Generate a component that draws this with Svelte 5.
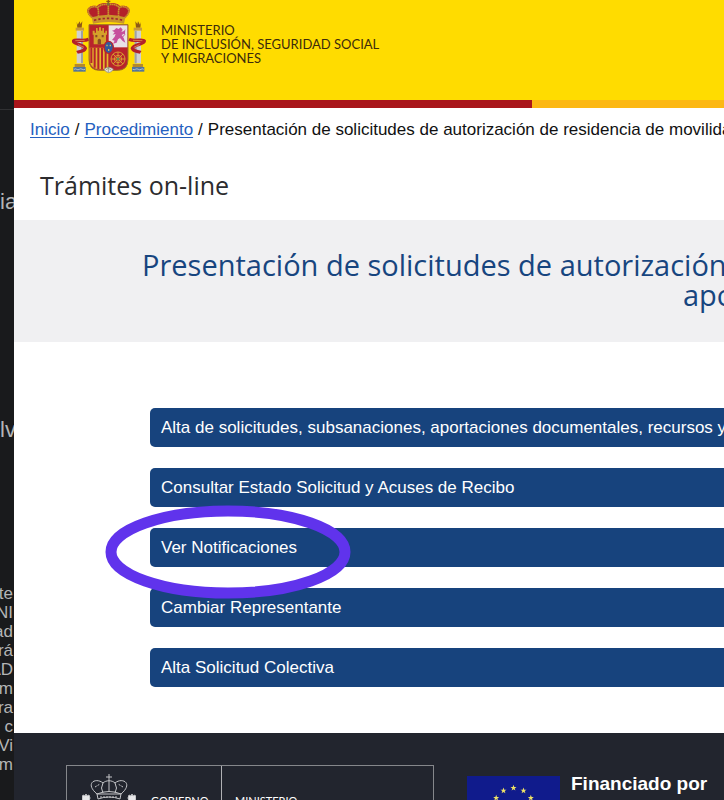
<script lang="ts">
  const ministry = ['MINISTERIO', 'DE INCLUSIÓN, SEGURIDAD SOCIAL', 'Y MIGRACIONES'];

  const actions = [
    'Alta de solicitudes, subsanaciones, aportaciones documentales, recursos y c',
    'Consultar Estado Solicitud y Acuses de Recibo',
    'Ver Notificaciones',
    'Cambiar Representante',
    'Alta Solicitud Colectiva'
  ];

  const asideLines = ['te', 'NI', 'ad', 'rá', 'AD', 'rm', 'ra', ', c', 'Vi', 'm'];

  const stars = Array.from({ length: 12 }, (_, i) => {
    const a = (i * Math.PI) / 6;
    return { x: 46.5 + 20 * Math.sin(a), y: 32 - 20 * Math.cos(a) };
  });

  const starPath = 'M0-3.2 .8-1 3-1 1.2.4 1.9 2.6 0 1.3-1.9 2.6-1.2.4-3-1-.8-1z';
</script>

{#snippet pillar()}
  <path d="M50 66l3 8 6-10 2 8 6-8-2 19H52z" fill="#8f5a16" />
  <path d="M47 83h25v9H47z" fill="#c89a3c" />
  <path d="M50 92h19v98H50z" fill="#cfd0d2" />
  <path d="M63 92h6v98h-6z" fill="#9da1a6" />
  <path d="M44 192h31v9H44z" fill="#b58a2c" />
  <path d="M40 201h37v14H40z" fill="#53759b" />
  <path d="M42 208c6-5 10 5 16 0s10 4 17 0" fill="none" stroke="#dfe5e8" stroke-width="2" />
  <path d="M86 118c-16 8-42-2-46 5 0 10 32 10 36 22-4 12-18 8-25 12" fill="none" stroke="#b3202a" stroke-width="10" />
  <path d="M46 122l28-1M54 134l18 8" stroke="#e6a75b" stroke-width="2" />
{/snippet}

<div class="shell">
  <aside class="backdrop">
    <div class="backdrop-top"></div>
    <p class="large first">ia</p>
    <p class="large second">lv</p>
    <div class="small">
      {#each asideLines as line}
        <p>{line}</p>
      {/each}
    </div>
  </aside>

  <div class="page">
    <header>
      <svg class="shield" viewBox="36 0 222 222" aria-hidden="true">
        {@render pillar()}
        <g transform="translate(293 0) scale(-1 1)">{@render pillar()}</g>
        <path d="M87 74h117v105q0 32-33 32h-16q-8 0-10 6-2-6-10-6h-15q-33 0-33-32z" fill="#b8232c" stroke="#9c7423" stroke-width="3" />
        <path d="M146 76h56v66h-56z" fill="#e9e2e6" />
        <path d="M89 143h56v65h-22q-34 0-34-31z" fill="#e3b52d" />
        <path d="M94 143v46M104 143v60M115 143v64M126 143v65M137 143v65" stroke="#b8232c" stroke-width="6" />
        <path d="M101 133v-29h-3V92h6v6h4V84h5v8h4V82h6v10h4v-8h5v14h4v-6h5v12h-3v29z" fill="#d5a02a" />
        <path d="M113 133v-13q5-8 10 0v13zM106 105h6v7h-6zM125 105h6v7h-6z" fill="#8b4a24" />
        <path d="M163 90l6-6 7 3 6-5 6 7-4 7 8-3 4-6-1 13-10 5 6 9 5 14-8-5-8-9-6 4-4 10-11 3 5-9-8-2 8-10 3-8-9 2 6-7-8-5z" fill="#c64f9c" />
        <path d="M187 112l7-8-1-10" fill="none" stroke="#c64f9c" stroke-width="3" />
        <g fill="none" stroke="#d99a30" stroke-width="3">
          <circle cx="174" cy="177" r="21" />
          <circle cx="174" cy="177" r="11" />
          <path d="M153 177h42M174 156v42M159 162l30 30M189 162l-30 30" />
        </g>
        <circle cx="174" cy="177" r="4" fill="#5f9c52" />
        <path d="M132 207q14-10 28 0-4 10-14 11-10-1-14-11z" fill="#e8e6dd" stroke="#8f8676" stroke-width="2" />
        <path d="M145 200v16M137 210l8-5 9 5" fill="none" stroke="#7c8a63" stroke-width="2" />
        <ellipse cx="146" cy="142" rx="14" ry="18" fill="#315a9c" stroke="#b8232c" stroke-width="4" />
        <path d="M139 134h4v5h-4zM149 134h4v5h-4zM144 147h4v6h-4z" fill="#d9b953" />
        <path d="M96 54C67 31 88 12 111 18c10-10 25-10 34-7 11-3 25-3 35 7 25-6 43 13 15 36z" fill="#b3202a" />
        <g fill="none" stroke="#c8942c" stroke-width="5" stroke-dasharray="5 1">
          <path d="M99 55C72 33 87 16 111 21c7 8 3 22 5 32" />
          <path d="M192 55c27-22 12-39-12-34-7 8-3 22-5 32" />
          <path d="M114 21c12-9 22-9 31-7v39M177 21c-12-9-22-9-31-7" />
        </g>
        <path d="M95 52q51-15 101 0l-4 19q-47-10-93 0z" fill="#c8942c" />
        <path d="M102 61q44-12 87 0" fill="none" stroke="#9d2430" stroke-width="5" stroke-dasharray="7 6" />
        <path d="M145 0v14M139 4h12" stroke="#8f5a16" stroke-width="4" />
        <circle cx="145" cy="12" r="5" fill="#7d6c35" />
      </svg>
      <div class="ministry">
        {#each ministry as line}
          <span>{line}</span>
        {/each}
      </div>
    </header>
    <div class="stripe"></div>

    <nav class="breadcrumb" aria-label="Ruta">
      <a href="#inicio">Inicio</a>
      <span>/</span>
      <a href="#procedimiento">Procedimiento</a>
      <span>/</span>
      <span>Presentación de solicitudes de autorización de residencia de movilidad</span>
    </nav>

    <main>
      <h2>Trámites on-line</h2>
      <h1>
        <span>Presentación de solicitudes de autorización</span>
        <span class="continued">apo</span>
      </h1>

      <div class="actions">
        {#each actions as action}
          <button type="button">{action}</button>
        {/each}
        <svg class="marker" viewBox="0 0 248 96" aria-hidden="true">
          <ellipse cx="124" cy="48" rx="117" ry="41" />
        </svg>
      </div>
    </main>

    <footer>
      <div class="entities">
        <div class="government">
          <svg class="crown" viewBox="0 0 54 40" aria-hidden="true">
            <path d="M27 0v8M24 3h6" />
            <path d="M15 20C2 9 14 3 21 9c3-3 9-3 12 0 7-6 19 0 6 11z" />
            <path d="M15 20q12-5 24 0l-1 5q-11-4-22 0zM21 9q-3 5 0 10M33 9q3 5 0 10M27 8v10" />
            <path d="M13 13l5-3M41 13l-5-3M18 23h18" stroke-dasharray="2 1" />
            <path d="M15 27h24v13M15 27v13M27 27v13M1 24h6v4H1zM47 24h6v4h-6zM2 30v10M6 30v10M48 30v10M52 30v10" />
            <path d="M0 24l1-3 2 1 1-2 1 2 2-1 1 3-1 3H1zM46 24l1-3 2 1 1-2 1 2 2-1 1 3-1 3h-6z" class="solid" />
          </svg>
          <span>GOBIERNO</span>
        </div>
        <div class="department">MINISTERIO</div>
      </div>
      <div class="funding">
        <svg class="flag" viewBox="0 0 93 64" aria-hidden="true">
          <rect width="93" height="64" fill="#101b8c" />
          {#each stars as star}
            <path d={starPath} fill="#eee266" transform="translate({star.x} {star.y})" />
          {/each}
        </svg>
        <strong>Financiado por</strong>
      </div>
    </footer>
  </div>
</div>

<style>
  :global(body) {
    margin: 0;
    background: #191a1c;
  }

  .shell {
    display: flex;
    height: 100vh;
    overflow: hidden;
    font-family: "Liberation Sans", Arial, sans-serif;
  }

  p,
  h1,
  h2 {
    margin: 0;
    font-weight: 400;
  }

  .backdrop {
    flex: 0 0 14px;
    overflow: hidden;
    background: #191a1c;
    color: #b4b5b6;
    white-space: nowrap;
  }

  .backdrop-top {
    height: 109px;
    border-bottom: 1px solid #303133;
  }

  .large {
    font-size: 22px;
    line-height: 28px;
  }

  .backdrop .first {
    margin-top: 78px;
  }

  .backdrop .second {
    margin-top: 200px;
  }

  .small {
    margin-top: 140px;
    font-size: 17px;
    line-height: 19px;
  }

  .small p {
    display: flex;
    justify-content: flex-end;
    padding-right: 1px;
  }

  .page {
    flex: 1;
    min-width: 0;
    overflow: hidden;
    background: #fff;
  }

  header {
    display: flex;
    align-items: flex-start;
    height: 100px;
    padding-left: 58px;
    background: #ffdc00;
  }

  .shield {
    width: 74px;
    height: 74px;
  }

  .ministry {
    display: flex;
    flex-direction: column;
    margin: 23px 0 0 15px;
    color: #3c2a0c;
    font-family: Lato, sans-serif;
    font-size: 13px;
    line-height: 14px;
    white-space: nowrap;
  }

  .stripe {
    height: 8px;
    background: linear-gradient(to right, #a9161b 73%, #fcb813 73%);
  }

  .breadcrumb {
    display: flex;
    gap: 5px;
    padding: 12px 0 0 16px;
    color: #111;
    font-size: 17px;
    line-height: 20px;
    white-space: nowrap;
  }

  .breadcrumb a {
    color: #2460c0;
    text-underline-offset: 2px;
  }

  h2 {
    padding: 28px 0 18px 26px;
    color: #2c2c2e;
    font-family: "Open Sans", sans-serif;
    font-size: 25px;
    line-height: 34px;
  }

  h1 {
    display: flex;
    flex-direction: column;
    padding: 30px 0 32px;
    background: #f0f0f2;
    color: #17457f;
    font-family: "Open Sans", sans-serif;
    font-size: 29px;
    line-height: 30px;
    white-space: nowrap;
  }

  h1 span {
    padding-left: 128px;
  }

  h1 .continued {
    padding-left: 669px;
  }

  .actions {
    position: relative;
    display: flex;
    flex-direction: column;
    gap: 21px;
    padding: 66px 0 46px 136px;
  }

  .actions button {
    height: 39px;
    padding: 0 0 0 11px;
    overflow: hidden;
    border: 0;
    border-radius: 5px 0 0 5px;
    background: #17437d;
    color: #fff;
    font-family: inherit;
    font-size: 17px;
    text-align: left;
    white-space: nowrap;
    cursor: pointer;
  }

  .marker {
    position: absolute;
    top: 162px;
    left: 90px;
    width: 248px;
    height: 96px;
    pointer-events: none;
  }

  .marker ellipse {
    fill: none;
    stroke: #6033ec;
    stroke-width: 11px;
  }

  footer {
    display: flex;
    align-items: flex-start;
    padding: 32px 0 32px 52px;
    background: #22252e;
    color: #fff;
  }

  .entities {
    display: flex;
    box-sizing: border-box;
    width: 368px;
    height: 88px;
    border: 1px solid #85878b;
    font-family: Lato, sans-serif;
    font-size: 11px;
    line-height: 14px;
  }

  .government {
    display: flex;
    box-sizing: border-box;
    width: 155px;
    padding: 8px 0 0 15px;
    gap: 15px;
    border-right: 1px solid #b0b1b4;
  }

  .government span {
    margin-top: 20px;
  }

  .crown {
    width: 54px;
    height: 40px;
    fill: none;
    stroke: #c4c5c8;
    stroke-width: 1;
  }

  .crown .solid {
    fill: #e8e8ea;
  }

  .department {
    padding: 28px 0 0 13px;
  }

  .funding {
    display: flex;
    gap: 11px;
    margin: 11px 0 0 33px;
    white-space: nowrap;
  }

  .flag {
    width: 93px;
    height: 64px;
  }

  .funding strong {
    margin-top: -4px;
    font-size: 19px;
    line-height: 24px;
  }
</style>
